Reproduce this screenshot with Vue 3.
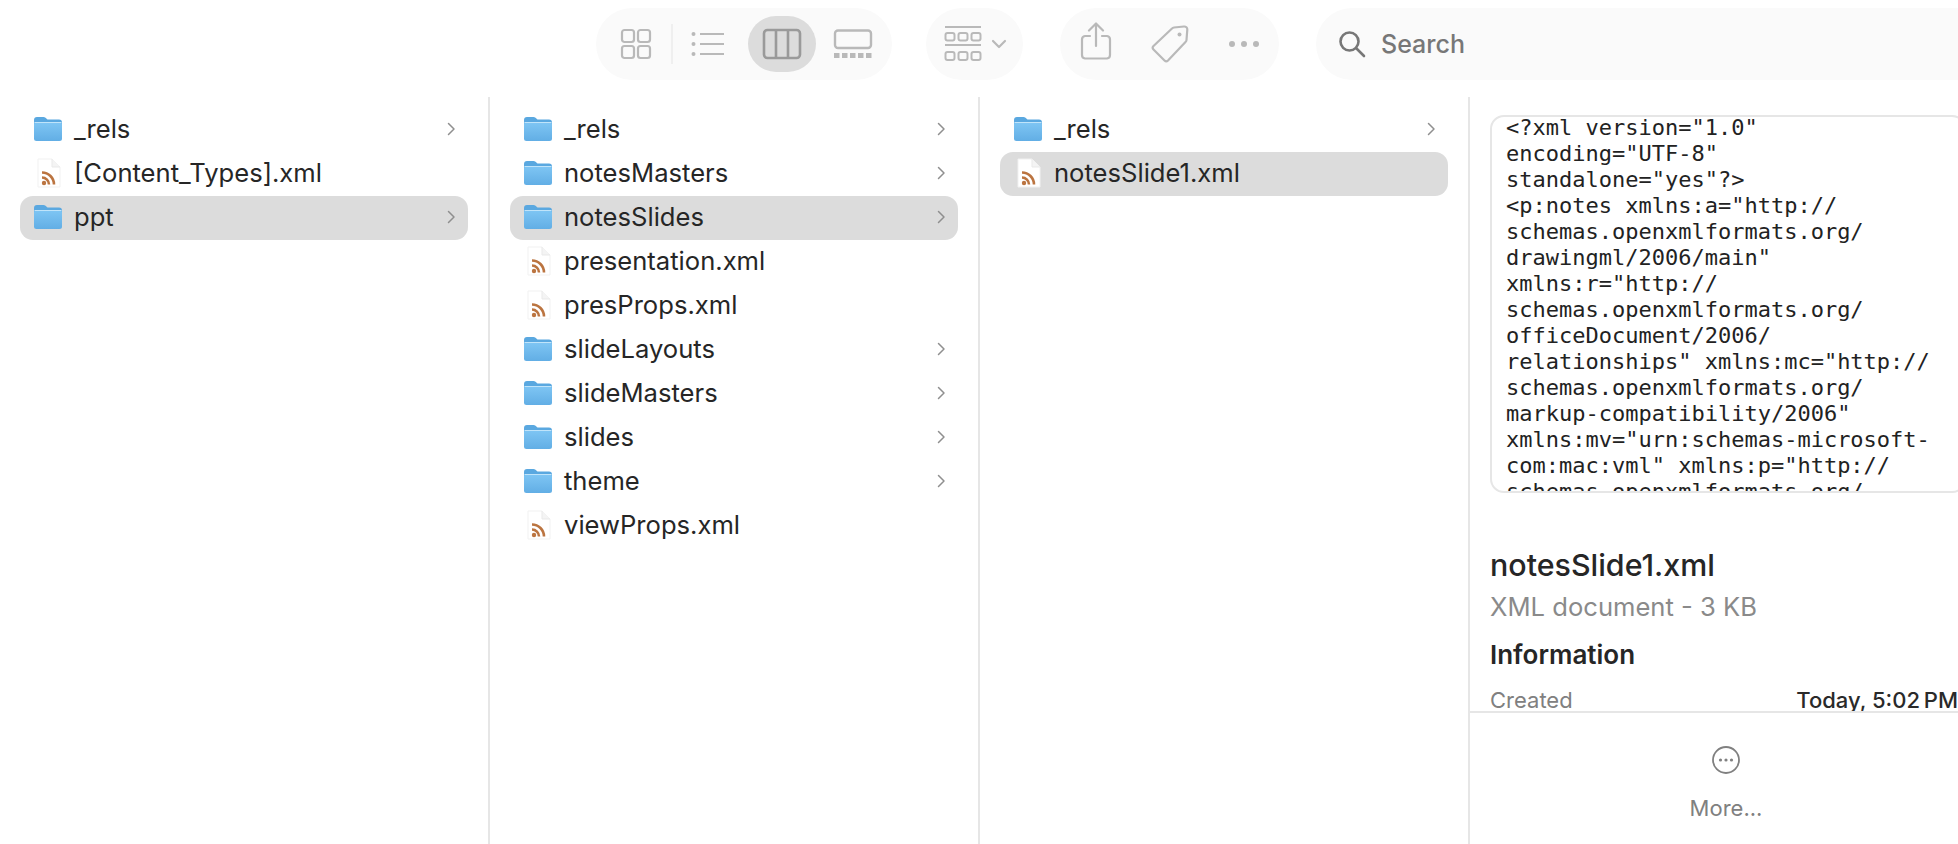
<script setup>
const col1 = [
  { name: '_rels', kind: 'folder' },
  { name: '[Content_Types].xml', kind: 'file' },
  { name: 'ppt', kind: 'folder', selected: true },
]
const col2 = [
  { name: '_rels', kind: 'folder' },
  { name: 'notesMasters', kind: 'folder' },
  { name: 'notesSlides', kind: 'folder', selected: true },
  { name: 'presentation.xml', kind: 'file' },
  { name: 'presProps.xml', kind: 'file' },
  { name: 'slideLayouts', kind: 'folder' },
  { name: 'slideMasters', kind: 'folder' },
  { name: 'slides', kind: 'folder' },
  { name: 'theme', kind: 'folder' },
  { name: 'viewProps.xml', kind: 'file' },
]
const col3 = [
  { name: '_rels', kind: 'folder' },
  { name: 'notesSlide1.xml', kind: 'file', selected: true },
]
const columns = [col1, col2, col3]
const xml = `<?xml version="1.0"
encoding="UTF-8"
standalone="yes"?>
<p:notes xmlns:a="http://
schemas.openxmlformats.org/
drawingml/2006/main"
xmlns:r="http://
schemas.openxmlformats.org/
officeDocument/2006/
relationships" xmlns:mc="http://
schemas.openxmlformats.org/
markup-compatibility/2006"
xmlns:mv="urn:schemas-microsoft-
com:mac:vml" xmlns:p="http://
schemas.openxmlformats.org/
presentationml/2006/main">`
</script>

<template>
  <div class="window">
    <header class="toolbar">
      <div class="pill views">
        <svg class="i-grid" width="32" height="32" viewBox="0 0 32 32" fill="none" stroke="#b9b9b9" stroke-width="2.2">
          <rect x="2" y="2" width="12" height="12" rx="2.5" />
          <rect x="18" y="2" width="12" height="12" rx="2.5" />
          <rect x="2" y="18" width="12" height="12" rx="2.5" />
          <rect x="18" y="18" width="12" height="12" rx="2.5" />
        </svg>
        <span class="sep"></span>
        <svg class="i-list" width="34" height="26" viewBox="0 0 34 26" fill="none" stroke="#b9b9b9" stroke-width="2.2">
          <path d="M9 3h24M9 13h24M9 23h24" />
          <g fill="#b9b9b9" stroke="none"><circle cx="2.5" cy="3" r="2" /><circle cx="2.5" cy="13" r="2" /><circle cx="2.5" cy="23" r="2" /></g>
        </svg>
        <span class="active">
          <svg width="40" height="32" viewBox="0 0 40 32" fill="none" stroke="#9a9a9a" stroke-width="2.6">
            <rect x="2" y="2" width="36" height="28" rx="3.5" />
            <path d="M14 2v28M26 2v28" />
          </svg>
        </span>
        <svg class="i-gallery" width="40" height="30" viewBox="0 0 40 30" fill="none" stroke="#b9b9b9" stroke-width="2.4">
          <rect x="2" y="1.5" width="36" height="17.5" rx="3" />
          <g fill="#b9b9b9" stroke="none">
            <rect x="1" y="24" width="5.5" height="5" /><rect x="9" y="24" width="5.5" height="5" /><rect x="17" y="24" width="5.5" height="5" /><rect x="25" y="24" width="5.5" height="5" /><rect x="33" y="24" width="5.5" height="5" />
          </g>
        </svg>
      </div>

      <div class="pill group">
        <svg width="38" height="38" viewBox="0 0 38 38" fill="none" stroke="#b9b9b9" stroke-width="2">
          <path d="M1 2h36M1 20h36" stroke-width="2.2" />
          <rect x="1.5" y="8" width="9" height="7.5" rx="2" /><rect x="14.5" y="8" width="9" height="7.5" rx="2" /><rect x="27.5" y="8" width="9" height="7.5" rx="2" />
          <rect x="1.5" y="27" width="9" height="8" rx="2" /><rect x="14.5" y="27" width="9" height="8" rx="2" /><rect x="27.5" y="27" width="9" height="8" rx="2" />
        </svg>
        <svg class="i-chev" width="16" height="10" viewBox="0 0 16 10" fill="none" stroke="#b9b9b9" stroke-width="2.2" stroke-linecap="round" stroke-linejoin="round">
          <path d="M2 2l6 6 6-6" />
        </svg>
      </div>

      <div class="pill actions">
        <svg class="i-share" width="32" height="38" viewBox="0 0 32 38" fill="none" stroke="#b9b9b9" stroke-width="2.2" stroke-linecap="round" stroke-linejoin="round">
          <path d="M16 24V2M9 8.5L16 1.5l7 7" />
          <path d="M10 14H5a3.500 3.500 0 0 0-3 3.500V33a3.500 3.500 0 0 0 3 3.500h22a3.500 3.500 0 0 0 3-3.500V17.500A3.500 3.500 0 0 0 27 14h-5" />
        </svg>
        <svg class="i-tag" width="38" height="38" viewBox="0 0 38 38" fill="none" stroke="#b9b9b9" stroke-width="2.2" stroke-linejoin="round">
          <path d="M21 3.500a3 3 0 0 1 2-1L33 1.500a3 3 0 0 1 3.300 3.200L35.500 15a3 3 0 0 1-1 2L17 35.500a2.500 2.500 0 0 1-3.500 0L2.500 24.500a2.500 2.500 0 0 1 0-3.500z" />
          <circle cx="28.500" cy="9.500" r="2" fill="#b9b9b9" stroke="none" />
        </svg>
        <svg class="i-dots" width="32" height="8" viewBox="0 0 32 8" fill="#b9b9b9">
          <circle cx="4" cy="4" r="3" /><circle cx="16" cy="4" r="3" /><circle cx="28" cy="4" r="3" />
        </svg>
      </div>

      <div class="search">
        <svg width="28" height="28" viewBox="0 0 28 28" fill="none" stroke="#777" stroke-width="2.6" stroke-linecap="round">
          <circle cx="11.500" cy="11.500" r="9" />
          <path d="M18.500 18.500L26 26" />
        </svg>
        <span>Search</span>
      </div>
    </header>

    <main class="browser">
      <section v-for="(col, c) in columns" :key="c" class="column">
        <div v-for="item in col" :key="item.name" class="row" :class="{ selected: item.selected }">
          <svg v-if="item.kind === 'folder'" class="icon folder" width="30" height="26" viewBox="0 0 30 26">
            <defs>
              <linearGradient :id="'fb' + c + item.name" x1="0" y1="0" x2="0" y2="1">
                <stop offset="0" stop-color="#7fc6f4" />
                <stop offset="1" stop-color="#62aee5" />
              </linearGradient>
            </defs>
            <path d="M1 4a3 3 0 0 1 3-3h6.500a3 3 0 0 1 2 .8L14.500 3.500H26a3 3 0 0 1 3 3V10H1z" fill="#5aa8e0" />
            <rect x="1" y="6" width="28" height="19" rx="2.500" :fill="'url(#fb' + c + item.name + ')'" />
            <path d="M1.500 6.500h27" stroke="#c0e4fa" stroke-width="1" />
          </svg>
          <svg v-else class="icon" width="30" height="30" viewBox="0 0 30 30">
            <path d="M4 1h14l8 8v20H4z" fill="#fff" stroke="#f1f1f1" stroke-width="1" />
            <path d="M18 1v8h8" fill="#f4f4f4" stroke="#e9e9e9" stroke-width="1" />
            <g fill="none" stroke="#bb7440" stroke-width="2.600">
              <path d="M8 14.500a12 12 0 0 1 12 12" />
              <path d="M8 19.500a7 7 0 0 1 7 7" />
            </g>
            <circle cx="10" cy="25" r="2.200" fill="#bb7440" />
          </svg>
          <span class="name">{{ item.name }}</span>
          <svg v-if="item.kind === 'folder'" class="chevron" width="9" height="14" viewBox="0 0 9 14" fill="none" stroke="#8f8f8f" stroke-width="1.500" stroke-linecap="round" stroke-linejoin="round">
            <path d="M1.500 1.500L7 7l-5.500 5.500" />
          </svg>
        </div>
      </section>

      <aside class="preview">
        <div class="scroll">
          <div class="code"><pre>{{ xml }}</pre></div>
          <h2>notesSlide1.xml</h2>
          <p class="kind">XML document - 3 KB</p>
          <h3>Information</h3>
          <div class="meta"><span>Created</span><b>Today, 5:02&#8201;PM</b></div>
        </div>
        <div class="more">
          <svg width="28" height="28" viewBox="0 0 28 28" fill="none" stroke="#808080" stroke-width="1.800">
            <circle cx="14" cy="14" r="13" />
            <g fill="#808080" stroke="none"><circle cx="8.500" cy="14" r="1.600" /><circle cx="14" cy="14" r="1.600" /><circle cx="19.500" cy="14" r="1.600" /></g>
          </svg>
          <span>More...</span>
        </div>
      </aside>
    </main>
  </div>
</template>

<style scoped>
.window {
  width: 1958px;
  height: 844px;
  overflow: hidden;
  background: #fff;
  display: flex;
  flex-direction: column;
  font-family: Inter, "Liberation Sans", sans-serif;
  color: #222;
}
.toolbar {
  height: 97px;
  flex: none;
  display: flex;
  align-items: flex-start;
  padding: 8px 0 0 596px;
  box-sizing: border-box;
}
.pill {
  height: 72px;
  border-radius: 36px;
  background: #fafafa;
  display: flex;
  align-items: center;
  flex: none;
  box-sizing: border-box;
}
.views { width: 296px; padding-left: 24px; margin-right: 34px; }
.sep { width: 2px; height: 40px; background: #efefef; margin: 0 18px 0 19px; }
.i-list { margin-right: 23px; }
.active {
  width: 68px;
  height: 56px;
  border-radius: 28px;
  background: #dcdcdc;
  display: flex;
  align-items: center;
  justify-content: center;
  margin-right: 17px;
}
.group { width: 97px; padding-left: 18px; margin-right: 37px; }
.i-chev { margin-left: 9px; }
.actions { width: 219px; padding-left: 20px; margin-right: 37px; }
.i-share { margin-top: -7px; margin-right: 39px; }
.i-tag { margin-right: 39px; }
.search {
  width: 660px;
  height: 72px;
  border-radius: 36px 0 0 36px;
  background: #fafafa;
  display: flex;
  align-items: center;
  padding-left: 22px;
  box-sizing: border-box;
  color: #777;
  font-size: 25px;
  font-weight: 500;
  gap: 15px;
}
.browser {
  flex: 1;
  display: flex;
  min-height: 0;
}
.column {
  width: 490px;
  flex: none;
  box-sizing: border-box;
  border-right: 2px solid #e6e6e6;
  padding: 11px 20px 0;
}
.row {
  height: 44px;
  display: flex;
  align-items: center;
  border-radius: 13px;
  padding: 0 14px 2px;
  box-sizing: border-box;
}
.row.selected { background: #dcdcdc; }
.icon { flex: none; margin-right: 10px; }
.icon.folder { margin-left: -1px; margin-right: 11px; }
.name {
  flex: 1;
  font-size: 25.6px;
  padding-bottom: 2px;
  color: #262626;
}
.chevron { flex: none; margin-right: -2px; }
.preview {
  flex: 1;
  min-width: 0;
  display: flex;
  flex-direction: column;
}
.scroll {
  height: 616px;
  flex: none;
  box-sizing: border-box;
  overflow: hidden;
  padding: 18px 0 0 20px;
  border-bottom: 2px solid #e6e6e6;
}
.code {
  height: 378px;
  box-sizing: border-box;
  border: 2px solid #e6e6e6;
  border-radius: 14px;
  overflow: hidden;
  padding-left: 14px;
  margin-right: -8px;
}
pre {
  margin: -2px 0 0;
  font-family: "DejaVu Sans Mono", monospace;
  font-size: 22px;
  line-height: 26px;
  color: #222;
}
h2 {
  margin: 54px 0 0;
  font-size: 30.4px;
  line-height: 36px;
  font-weight: 500;
  color: #262626;
}
.kind {
  margin: 6px 0 0;
  font-size: 25.6px;
  line-height: 36px;
  color: #8a8a8a;
}
h3 {
  margin: 12px 0 0;
  font-size: 26px;
  line-height: 36px;
  font-weight: 600;
  color: #262626;
}
.meta {
  margin-top: 12px;
  display: flex;
  justify-content: space-between;
  font-size: 22px;
  line-height: 30px;
  color: #808080;
}
.meta b { font-weight: 500; color: #2a2a2a; }
.more {
  flex: 1;
  display: flex;
  flex-direction: column;
  align-items: center;
  padding-top: 33px;
  padding-left: 24px;
  color: #808080;
  font-size: 22px;
  gap: 21px;
}
</style>

<style>
html, body { background: #fff; overflow: hidden; }
</style>
